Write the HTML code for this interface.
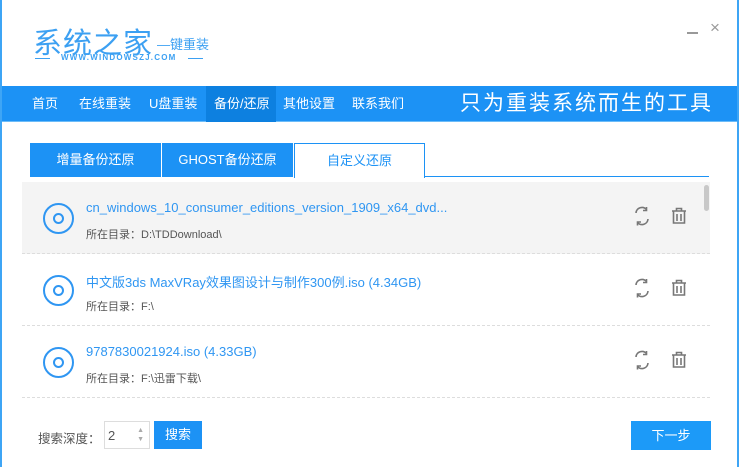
<!DOCTYPE html>
<html><head><meta charset="utf-8"><style>
*{margin:0;padding:0;box-sizing:border-box}
body{width:739px;height:467px;background:#fff;font-family:"Liberation Sans","Noto Sans CJK SC",sans-serif;position:relative;overflow:hidden}
.abs{position:absolute}
.win{position:absolute;left:0;top:0;width:739px;height:467px;border-left:2px solid #3ea5f5;border-right:2px solid #3ea5f5}
.nav{left:2px;top:86px;width:735px;height:36px;background:#1c92f5;border-bottom:1px solid #6cbcf8}
.nav span{position:absolute;top:0;height:36px;line-height:36px;color:#fff;font-size:13px}
.tab{top:143px;height:34px;line-height:34px;text-align:center;font-size:13px;color:#fff;background:#1c92f5}
.row{left:22px;width:688px;height:72px;border-bottom:1px dashed #ddd}
.disc{left:21px;top:21px;width:31px;height:31px;border:2px solid #2f96f2;border-radius:50%}
.disc:after{content:"";position:absolute;left:8px;top:8px;width:11px;height:11px;border:2px solid #2f96f2;border-radius:50%;box-sizing:border-box}
.t1{left:64px;top:18px;font-size:13px;color:#2f96f2;white-space:nowrap}
.t2{left:64px;top:44px;font-size:11px;color:#555;white-space:nowrap}
</style></head><body>
<div class="win"></div>
<div class="abs" style="left:33px;top:20px;font-size:29px;color:#3ca0f2;letter-spacing:1px">系统之家</div>
<div class="abs" style="left:157px;top:34px;font-size:13px;color:#3ca0f2">—键重装</div>
<div class="abs" style="left:35px;top:58px;width:15px;height:1px;background:#3ca0f2"></div>
<div class="abs" style="left:61px;top:53px;font-size:8px;color:#3ca0f2;letter-spacing:1.2px;font-weight:bold">WWW.WINDOWSZJ.COM</div>
<div class="abs" style="left:188px;top:58px;width:15px;height:1px;background:#3ca0f2"></div>
<div class="abs" style="left:687px;top:32px;width:11px;height:2px;background:#999"></div>
<div class="abs" style="left:710px;top:18px;font-size:17px;color:#999">×</div>
<div class="abs nav">
<span style="left:30px">首页</span>
<span style="left:77px">在线重装</span>
<span style="left:147px">U盘重装</span>
<span style="left:204px;width:70px;background:#0d80e0;padding-left:8px">备份/还原</span>
<span style="left:281px">其他设置</span>
<span style="left:350px">联系我们</span>
<span style="left:458px;font-size:21px;letter-spacing:2px">只为重装系统而生的工具</span>
</div>
<div class="abs tab" style="left:30px;width:131px">增量备份还原</div>
<div class="abs tab" style="left:162px;width:131px">GHOST备份还原</div>
<div class="abs tab" style="left:294px;width:131px;background:#fff;color:#1c92f5;border:1px solid #1c92f5;border-bottom:none;height:35px">自定义还原</div>
<div class="abs" style="left:425px;top:176px;width:284px;height:1px;background:#1c92f5"></div>

<div class="abs row" style="top:182px;background:#f4f4f4"><div class="abs disc"></div><div class="abs t1">cn_windows_10_consumer_editions_version_1909_x64_dvd...</div><div class="abs t2">所在目录：D:\TDDownload\</div></div>
<div class="abs row" style="top:254px"><div class="abs disc"></div><div class="abs t1">中文版3ds MaxVRay效果图设计与制作300例.iso (4.34GB)</div><div class="abs t2">所在目录：F:\</div></div>
<div class="abs row" style="top:326px"><div class="abs disc"></div><div class="abs t1">9787830021924.iso (4.33GB)</div><div class="abs t2">所在目录：F:\迅雷下载\</div></div>
<div class="abs" style="left:704px;top:185px;width:5px;height:26px;background:#c8c8c8;border-radius:3px"></div>

<svg class="abs" style="left:0;top:0" width="739" height="467">
<g fill="none" stroke="#777" stroke-width="1.6">
<g id="ic"><path d="M636 213a6 6 0 0 1 10.5-3.5M648 219a6 6 0 0 1-10.5 3.5"/><path d="M646.5 207v3.5h-3.5M637.5 225.5v-3.5h3.5"/>
<path d="M672 211h14M676.5 211v-2.5h5v2.5M673.5 211.5v11.5h11v-11.5M677 214v7M681 214v7"/></g>
<use href="#ic" y="72"/><use href="#ic" y="144"/>
</g></svg>

<div class="abs" style="left:38px;top:428px;font-size:12.5px;color:#555">搜索深度：</div>
<div class="abs" style="left:104px;top:421px;width:46px;height:28px;border:1px solid #ddd;font-size:13px;color:#555;padding:6px 0 0 3px">2<span style="position:absolute;right:5px;top:4px;font-size:7px;color:#aaa;line-height:9px">▲<br>▼</span></div>
<div class="abs" style="left:154px;top:421px;width:48px;height:28px;background:#1c92f5;color:#fff;font-size:13px;text-align:center;line-height:28px">搜索</div>
<div class="abs" style="left:631px;top:421px;width:80px;height:29px;background:#1c9af8;color:#fff;font-size:13px;text-align:center;line-height:29px">下一步</div>
</body></html>
